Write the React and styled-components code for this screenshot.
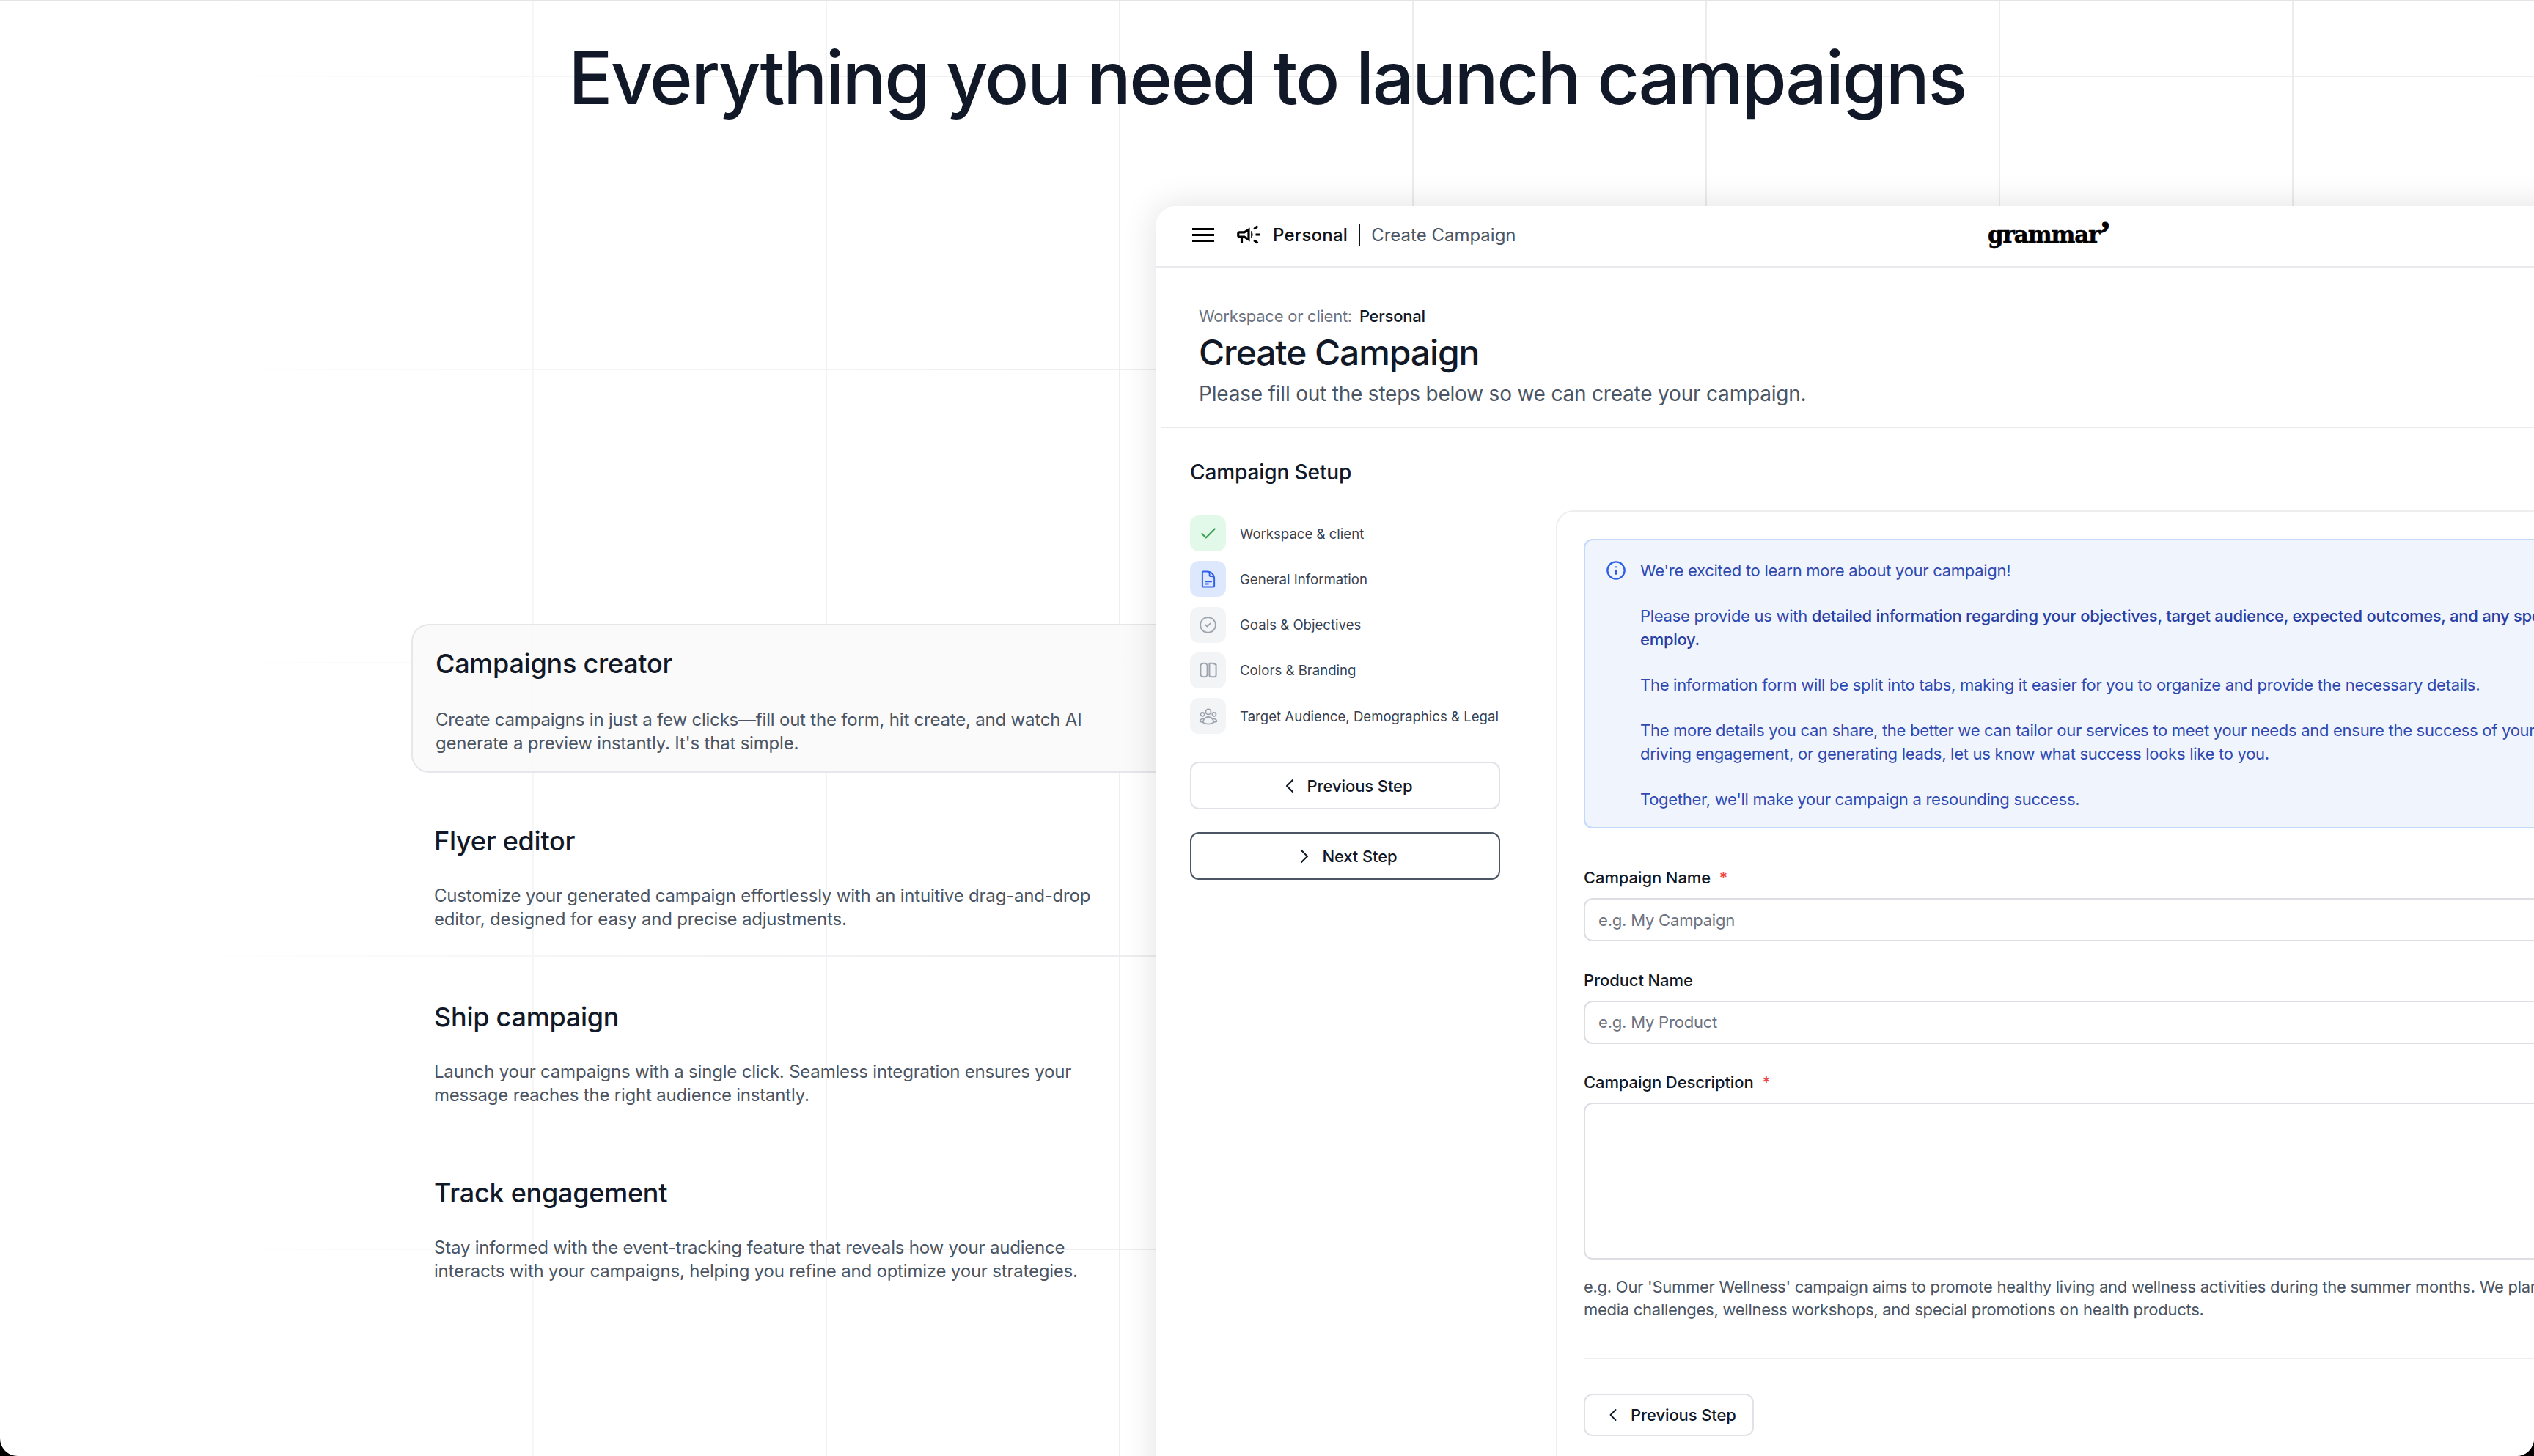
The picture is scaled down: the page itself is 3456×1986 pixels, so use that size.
import React from 'react'
import styled, { createGlobalStyle } from 'styled-components'
import { Check, ChevronLeft, ChevronRight, CircleCheck, Info } from 'lucide-react'
import { HiOutlineDocumentText, HiOutlineUserGroup } from 'react-icons/hi2'
import { MdOutlineCampaign } from 'react-icons/md'

const features = [
  {
    title: 'Campaigns creator',
    text: "Create campaigns in just a few clicks—fill out the form, hit create, and watch AI generate a preview instantly. It's that simple.",
    active: true,
  },
  {
    title: 'Flyer editor',
    text: 'Customize your generated campaign effortlessly with an intuitive drag-and-drop editor, designed for easy and precise adjustments.',
  },
  {
    title: 'Ship campaign',
    text: 'Launch your campaigns with a single click. Seamless integration ensures your message reaches the right audience instantly.',
  },
  {
    title: 'Track engagement',
    text: 'Stay informed with the event-tracking feature that reveals how your audience interacts with your campaigns, helping you refine and optimize your strategies.',
  },
]

function PanelsIcon() {
  return (
    <svg width="24" height="22" viewBox="0 0 34 30" fill="none" stroke="currentColor" strokeWidth="2.8">
      <rect x="2" y="2" width="13" height="26" rx="5" />
      <path d="M19 2h8l5 3v20a3 3 0 0 1-3 3h-7a3 3 0 0 1-3-3z" strokeLinejoin="round" />
    </svg>
  )
}

const steps = [
  { label: 'Workspace & client', tone: 'done', icon: <Check size={26} strokeWidth={2} /> },
  { label: 'General Information', tone: 'current', icon: <HiOutlineDocumentText size={26} strokeWidth={1.8} /> },
  { label: 'Goals & Objectives', tone: 'idle', icon: <CircleCheck size={25} strokeWidth={1.7} /> },
  { label: 'Colors & Branding', tone: 'idle', icon: <PanelsIcon /> },
  { label: 'Target Audience, Demographics & Legal', tone: 'idle', icon: <HiOutlineUserGroup size={28} /> },
]

const stepTones = {
  done: { bg: '#e2f8e8', fg: '#3f9f57' },
  current: { bg: '#dde8fd', fg: '#2f5fe8' },
  idle: { bg: '#f3f4f6', fg: '#9ca3af' },
}

export default function App() {
  return (
    <>
      <GlobalStyle />
      <Frame>
        <Page>
          <GridLines />
          <Title>Everything you need to launch campaigns</Title>
          <Body>
            <FeatureList>
              {features.map((f) => (
                <Feature key={f.title} $active={f.active}>
                  <FeatureTitle $active={f.active}>{f.title}</FeatureTitle>
                  <FeatureText>{f.text}</FeatureText>
                </Feature>
              ))}
            </FeatureList>

            <Card>
              <CardHeader>
                <HeaderLeft>
                  <Burger>
                    <span />
                    <span />
                    <span />
                  </Burger>
                  <MdOutlineCampaign size={38} />
                  <Crumb>Personal</Crumb>
                  <CrumbDivider />
                  <CrumbPage>Create Campaign</CrumbPage>
                </HeaderLeft>
                <Logo>
                  grammar<LogoMark>’</LogoMark>
                </Logo>
              </CardHeader>

              <Intro>
                <Workspace>
                  Workspace or client: <strong>Personal</strong>
                </Workspace>
                <PageTitle>Create Campaign</PageTitle>
                <PageSub>Please fill out the steps below so we can create your campaign.</PageSub>
              </Intro>

              <SetupRow>
                <Sidebar>
                  <SetupTitle>Campaign Setup</SetupTitle>
                  <StepList>
                    {steps.map((s) => (
                      <Step key={s.label}>
                        <StepIcon $tone={s.tone}>{s.icon}</StepIcon>
                        {s.label}
                      </Step>
                    ))}
                  </StepList>
                  <SideButton>
                    <ChevronLeft size={32} strokeWidth={1.6} />
                    Previous Step
                  </SideButton>
                  <SideButton $primary>
                    <ChevronRight size={32} strokeWidth={1.6} />
                    Next Step
                  </SideButton>
                </Sidebar>

                <FormPanel>
                  <Notice>
                    <NoticeIcon>
                      <Info size={28} strokeWidth={2} />
                    </NoticeIcon>
                    <NoticeBody>
                      <p>We're excited to learn more about your campaign!</p>
                      <p>
                        Please provide us with{' '}
                        <b>detailed information regarding your objectives, target audience, expected outcomes, and any specific strategies you would like us to</b>
                        <br />
                        <b>employ.</b>
                      </p>
                      <p>The information form will be split into tabs, making it easier for you to organize and provide the necessary details.</p>
                      <p>
                        The more details you can share, the better we can tailor our services to meet your needs and ensure the success of your campaign. Whether it's building awareness,
                        <br />
                        driving engagement, or generating leads, let us know what success looks like to you.
                      </p>
                      <p>Together, we'll make your campaign a resounding success.</p>
                    </NoticeBody>
                  </Notice>

                  <Field>
                    <Label>
                      Campaign Name <Required>*</Required>
                    </Label>
                    <TextInput placeholder="e.g. My Campaign" readOnly />
                  </Field>
                  <Field>
                    <Label>Product Name</Label>
                    <TextInput placeholder="e.g. My Product" readOnly />
                  </Field>
                  <Field>
                    <Label>
                      Campaign Description <Required>*</Required>
                    </Label>
                    <TextArea readOnly />
                  </Field>
                  <Hint>
                    e.g. Our 'Summer Wellness' campaign aims to promote healthy living and wellness activities during the summer months. We plan to run social
                    <br />
                    media challenges, wellness workshops, and special promotions on health products.
                  </Hint>
                  <FormDivider />
                  <BackButton>
                    <ChevronLeft size={28} strokeWidth={1.6} />
                    Previous Step
                  </BackButton>
                </FormPanel>
              </SetupRow>
            </Card>
          </Body>
        </Page>
      </Frame>
    </>
  )
}

const GlobalStyle = createGlobalStyle`
  * {
    box-sizing: border-box;
  }

  html, body {
    background: #000;
    margin: 0;
    padding: 0;
  }

  body {
    font-family: Inter, "Noto Sans", sans-serif;
    -webkit-font-smoothing: antialiased;
  }

  p {
    margin: 0;
  }
`

const Frame = styled.div`
  background: #000;
  height: 1986px;
  overflow: hidden;
  width: 3456px;
`

const Page = styled.div`
  background: #fff;
  border-radius: 0 0 24px 24px;
  border-top: 2px solid #e4e4e4;
  height: 1986px;
  overflow: hidden;
  position: relative;
`

const GridLines = styled.div`
  background-image:
    linear-gradient(to right, #ececef 2px, transparent 2px),
    linear-gradient(to bottom, #ececef 2px, transparent 2px);
  background-position: 326px 101px;
  background-size: 400px 400px;
  inset: 0;
  mask-image: linear-gradient(to right, transparent 8%, rgba(0, 0, 0, 0.5) 22%, #000 50%);
  position: absolute;
`

const Title = styled.h1`
  color: #111827;
  font-size: 100px;
  font-weight: 500;
  height: 279px;
  letter-spacing: -0.025em;
  line-height: 1;
  margin: 0;
  padding-top: 54px;
  position: relative;
  text-align: center;
`

const Body = styled.div`
  align-items: flex-start;
  display: flex;
  padding-left: 561px;
  position: relative;
`

const FeatureList = styled.div`
  display: flex;
  flex: 0 0 1015px;
  flex-direction: column;
  gap: 37px;
  margin-top: 570px;
`

const Feature = styled.div`
  background: ${(p) => (p.$active ? 'rgba(249, 249, 250, 0.9)' : 'transparent')};
  border: ${(p) => (p.$active ? '2px solid #e7e7eb' : 'none')};
  border-radius: 24px 0 0 24px;
  border-right: none;
  height: 203px;
  margin-right: ${(p) => (p.$active ? '-40px' : '0')};
  padding: ${(p) => (p.$active ? '24px 0 0 31px' : '28px 0 0 31px')};
`

const FeatureTitle = styled.h3`
  color: #111827;
  font-size: 36px;
  font-weight: 500;
  letter-spacing: -0.25px;
  line-height: 56px;
  margin: 0 0 ${(p) => (p.$active ? '33px' : '31px')};
`

const FeatureText = styled.p`
  color: #4b5563;
  font-size: 24px;
  letter-spacing: -0.2px;
  line-height: 32px;
  width: 940px;
`

const Card = styled.section`
  background: #fff;
  border-top-left-radius: 28px;
  box-shadow: 0 0 48px rgba(0, 0, 0, 0.12);
  display: flex;
  flex: 0 0 2400px;
  flex-direction: column;
  position: relative;
`

const CardHeader = styled.header`
  align-items: center;
  border-bottom: 2px solid #e9e9ee;
  color: #000;
  display: grid;
  grid-template-columns: 1135px auto;
  height: 84px;
  padding-bottom: 4px;
`

const HeaderLeft = styled.div`
  align-items: center;
  display: flex;
  padding-left: 50px;
`

const Burger = styled.div`
  display: flex;
  flex-direction: column;
  gap: 5px;
  margin-right: 28px;
  width: 30px;

  & span {
    background: #000;
    display: block;
    height: 3px;
  }
`

const Crumb = styled.span`
  color: #111;
  font-size: 24px;
  font-weight: 450;
  letter-spacing: 0.25px;
  margin-left: 14px;
`

const CrumbDivider = styled.span`
  background: #111;
  height: 31px;
  margin: 0 15px;
  width: 2px;
`

const CrumbPage = styled.span`
  color: #4b5563;
  font-size: 24px;
`

const Logo = styled.span`
  color: #000;
  font-family: "DejaVu Serif", "Liberation Serif", serif;
  font-size: 31px;
  font-weight: 700;
  letter-spacing: -0.035em;
  line-height: 1;
  -webkit-text-stroke: 0.6px #000;
`

const LogoMark = styled.span`
  font-family: "Liberation Serif", serif;
  font-size: 46px;
  line-height: 0;
  -webkit-text-stroke: 1.2px #000;
  vertical-align: -3px;
`

const Intro = styled.div`
  border-bottom: 2px solid #e9e9ee;
  height: 219px;
  margin-left: 8px;
  padding: 50px 0 0 51px;
`

const Workspace = styled.div`
  color: #6b7280;
  font-size: 22px;
  letter-spacing: -0.25px;
  line-height: 32px;

  & strong {
    color: #111827;
    font-weight: 500;
    margin-left: 4px;
  }
`

const PageTitle = styled.h2`
  color: #111827;
  font-size: 48px;
  font-weight: 500;
  letter-spacing: -1.1px;
  line-height: 64px;
  margin: 2px 0 0;
`

const PageSub = styled.p`
  color: #4b5563;
  font-size: 28px;
  letter-spacing: -0.2px;
  line-height: 40px;
  margin-top: 4px;
`

const SetupRow = styled.div`
  display: flex;
`

const Sidebar = styled.aside`
  display: flex;
  flex: 0 0 546px;
  flex-direction: column;
  padding-left: 47px;
`

const SetupTitle = styled.h3`
  color: #111827;
  font-size: 28px;
  font-weight: 500;
  letter-spacing: -0.1px;
  line-height: 40px;
  margin: 40px 0 39px;
`

const StepList = styled.ul`
  display: flex;
  flex-direction: column;
  gap: 13.3px;
  list-style: none;
  margin: 0 0 38px;
  padding: 0;
`

const Step = styled.li`
  align-items: center;
  color: #374151;
  display: flex;
  font-size: 18.6px;
  gap: 19px;
  white-space: nowrap;
`

const StepIcon = styled.span`
  align-items: center;
  background: ${(p) => stepTones[p.$tone].bg};
  border-radius: 12px;
  color: ${(p) => stepTones[p.$tone].fg};
  display: flex;
  flex: 0 0 49px;
  height: 49px;
  justify-content: center;
`

const SideButton = styled.button`
  align-items: center;
  background: #fff;
  border: 2px solid ${(p) => (p.$primary ? '#4b5563' : '#e0e2e7')};
  border-radius: 12px;
  color: #111827;
  display: flex;
  flex-shrink: 0;
  font-family: inherit;
  font-size: 22px;
  font-weight: 500;
  gap: 8px;
  height: 65px;
  justify-content: center;
  letter-spacing: -0.1px;
  margin-bottom: 31px;
  padding: 0;
  width: 423px;
`

const FormPanel = styled.div`
  border: 2px solid #eeeef0;
  border-radius: 24px 0 0 0;
  flex: 1;
  margin-top: 112px;
  padding: 37px 0 200px 36px;
`

const Notice = styled.div`
  background: #eff4fd;
  border: 2px solid #c3d9fb;
  border-radius: 12px;
  color: #3049b0;
  display: flex;
  font-size: 22px;
  height: 395px;
  letter-spacing: -0.28px;
  line-height: 31.2px;
  margin-bottom: 52px;
  padding: 26px 0 24px 28px;
  white-space: nowrap;
`

const NoticeIcon = styled.span`
  color: #2f5fe8;
  display: flex;
  flex: 0 0 47px;
  height: 31px;
  margin-top: 1px;
`

const NoticeBody = styled.div`
  display: flex;
  flex-direction: column;
  gap: 31.2px;

  & b {
    color: #2a3fa3;
    font-weight: 500;
  }
`

const Field = styled.div`
  display: flex;
  flex-direction: column;
  margin-bottom: 37.5px;
`

const Label = styled.label`
  color: #111827;
  font-size: 22px;
  font-weight: 500;
  letter-spacing: -0.1px;
  line-height: 30px;
  margin-bottom: 13px;
`

const Required = styled.span`
  color: #ef4444;
  margin-left: 6px;
`

const TextInput = styled.input`
  border: 2px solid #dcdee3;
  border-radius: 12px;
  font-family: inherit;
  font-size: 22px;
  height: 59px;
  letter-spacing: -0.2px;
  outline: none;
  padding: 0 18px;

  &::placeholder {
    color: #6b7280;
  }
`

const TextArea = styled.textarea`
  border: 2px solid #dcdee3;
  border-radius: 12px;
  display: block;
  height: 214px;
  margin-bottom: -16px;
  outline: none;
  resize: none;
`

const Hint = styled.p`
  color: #4b5563;
  font-size: 22px;
  letter-spacing: -0.27px;
  line-height: 31.5px;
  white-space: nowrap;
`

const FormDivider = styled.hr`
  border: none;
  border-top: 2px solid #eeeef0;
  margin: 49px 0 47px;
`

const BackButton = styled.button`
  align-items: center;
  background: #fff;
  border: 2px solid #e0e2e7;
  border-radius: 12px;
  color: #111827;
  display: flex;
  font-family: inherit;
  font-size: 22px;
  font-weight: 500;
  gap: 10px;
  height: 58px;
  letter-spacing: -0.1px;
  padding: 0 0 0 24px;
  width: 232px;
`
